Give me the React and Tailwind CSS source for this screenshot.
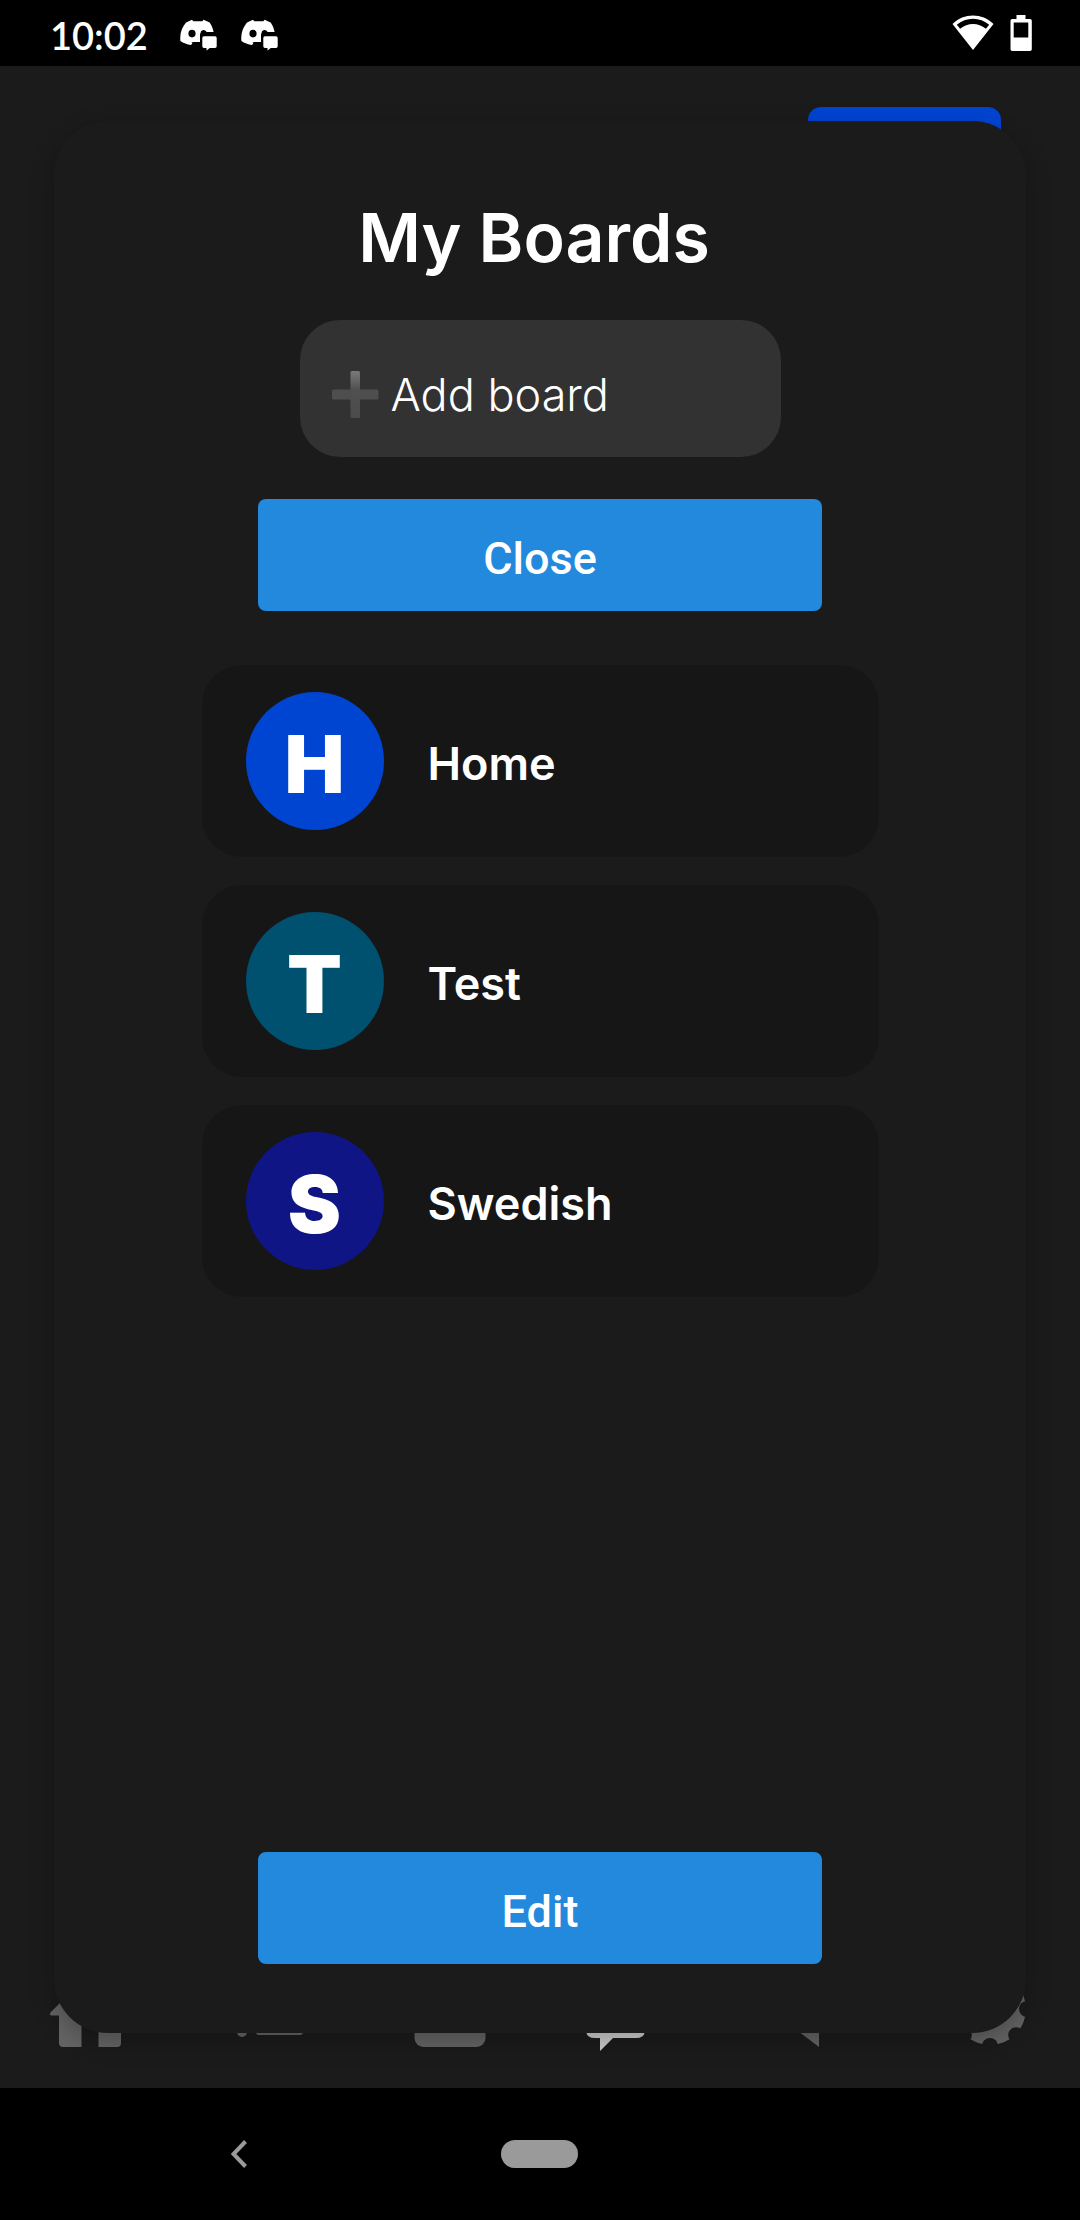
import React from "react";

const boards = [
  { name: "Home", color: "bg-[#0044d2]" },
  { name: "Test", color: "bg-[#00506f]" },
  { name: "Swedish", color: "bg-[#101585]" },
];

function DiscordNotification() {
  return (
    <svg width="37" height="32" viewBox="0 0 37 32" fill="#fff" aria-hidden="true">
      <path
        fillRule="evenodd"
        d="M6 3.5 12 .8l1.3 1.4h9L23.6.8l6 2.7c2.2 3 3.5 6.500 4 9.500H22.500c-1.500 0-2.500 1.200-2.500 2.700V23h-6.500l-2 .4.8 1.200-1.300 1.400C7 25.300 3.400 24.200.4 22-.4 14.500 1.800 8.500 6 3.500Zm6 7.300a3.600 3.800 0 1 0 0 7.600 3.600 3.800 0 0 0 0-7.600Zm8.400 2.600c.8-1.700 2.200-2.800 4-2.200 1.100.300 1.800 1 2.200 1.800h-4.100Z"
      />
      <path d="M24 17.300h11a1.700 1.700 0 0 1 1.700 1.700v8.200a1.700 1.700 0 0 1-1.700 1.700h-5.200l-3.300 2.600v-2.600H24a1.700 1.700 0 0 1-1.700-1.700V19a1.700 1.700 0 0 1 1.700-1.700Z" />
    </svg>
  );
}

function WifiIcon() {
  return (
    <svg width="42" height="36" viewBox="0 0 42 36" fill="#fff" aria-hidden="true">
      <path
        fillRule="evenodd"
        d="M.5 9C12-2.300 30-2.300 41.500 9L21 35Zm4.300.700 3.300 4c7.600-6.400 18.200-6.400 25.800 0l3.300-4C28 1.600 14 1.600 4.800 9.700Z"
      />
    </svg>
  );
}

function BatteryIcon() {
  return (
    <svg width="22" height="36" viewBox="0 0 22 36" fill="#fff" aria-hidden="true">
      <path
        fillRule="evenodd"
        d="M6.500 0h9v4H20a1.800 1.800 0 0 1 1.800 1.800v28.400A1.800 1.800 0 0 1 20 36H2.200A1.800 1.800 0 0 1 .5 34.200V5.800A1.800 1.800 0 0 1 2.200 4h4.300ZM3.700 7.500v15h14.600v-15Z"
      />
    </svg>
  );
}

function PlusIcon() {
  return (
    <svg width="47" height="47" viewBox="0 0 47 47" className="shrink-0" aria-hidden="true">
      <defs>
        <linearGradient id="plus" x1="0" y1="0" x2="0" y2="1">
          <stop offset="0" stopColor="#7a7a7a" />
          <stop offset=".4" stopColor="#505050" />
          <stop offset="1" stopColor="#4b4b4b" />
        </linearGradient>
      </defs>
      <rect y="18.500" width="46.500" height="10" rx="1.500" fill="#4e4e4e" />
      <rect x="18.500" width="9.500" height="47" rx="1.500" fill="url(#plus)" />
    </svg>
  );
}

const gearNotches = [0, 45, 90, 135, 180, 225, 270, 315];

const tabs = [
  {
    label: "Home",
    color: "text-[#646464]",
    icon: (
      <path d="M48 12 8.500 51.500Q7 54.500 10 54.500H17V82Q17 86 21 86H39.500V58H56.500V86H75Q79 86 79 82V54.500H87Q89 54.500 87.500 51.500Z" />
    ),
  },
  {
    label: "List",
    color: "text-[#646464]",
    icon: (
      <>
        <circle cx="20" cy="26" r="5" />
        <circle cx="20" cy="49" r="5" />
        <circle cx="20" cy="71" r="5" />
        <rect x="34" y="22" width="47" height="8" rx="3" />
        <rect x="34" y="45" width="47" height="8" rx="3" />
        <rect x="34" y="66" width="47" height="8" rx="3" />
      </>
    ),
  },
  {
    label: "Board",
    color: "text-[#646464]",
    icon: <rect x="12.500" y="14" width="71" height="72" rx="9" />,
  },
  {
    label: "Chat",
    color: "text-[#cccccc]",
    icon: <path d="M13 30H54Q63 30 63 39V69Q63 77 54 77H31L18 90V77H13Q4 77 4 69V39Q4 30 13 30Z" />,
  },
  {
    label: "Announcements",
    color: "text-[#646464]",
    icon: <path d="M57 13V86L28 64H14V35H28Z" />,
  },
  {
    label: "Settings",
    color: "text-[#646464]",
    icon: (
      <>
        <mask id="gear">
          <circle cx="48" cy="48" r="36" fill="#fff" />
          <circle cx="48" cy="48" r="12" fill="#000" />
          {gearNotches.map((angle) => (
            <circle key={angle} cx="48" cy="85" r="8" fill="#000" transform={`rotate(${angle} 48 48)`} />
          ))}
        </mask>
        <rect width="96" height="96" mask="url(#gear)" />
      </>
    ),
  },
];

function StatusBar() {
  return (
    <header className="flex h-[66px] items-center justify-between bg-black pr-12 pl-[50px]">
      <div className="flex items-center">
        <time className="pt-1 font-['Lato',sans-serif] text-[38px] leading-none font-semibold">10:02</time>
        <div className="ml-8 flex gap-6 pt-1">
          <DiscordNotification />
          <DiscordNotification />
        </div>
      </div>
      <div className="flex items-center gap-4">
        <WifiIcon />
        <BatteryIcon />
      </div>
    </header>
  );
}

function ActionButton({ children }) {
  return (
    <button
      type="button"
      className="h-28 w-[58%] shrink-0 rounded-lg bg-[#2289dd] pt-1.5 font-['Roboto',sans-serif] text-[45px] leading-none font-medium"
    >
      {children}
    </button>
  );
}

function BoardsModal() {
  return (
    <section
      role="dialog"
      aria-labelledby="boards-title"
      className="absolute inset-x-[5%] inset-y-[55px] flex flex-col items-center rounded-[54px] bg-[#1b1b1b] pt-[76px] pb-[69px] shadow-[0_8px_24px_rgba(0,0,0,0.25)]"
    >
      <h1 id="boards-title" className="pr-3 text-[68px] leading-[80px] font-semibold">
        My Boards
      </h1>
      <label className="mt-[43px] flex h-[137px] w-[481px] max-w-full shrink-0 items-center gap-3 rounded-[40px] bg-[#323232] pt-3 pr-8 pl-8">
        <PlusIcon />
        <input
          type="text"
          aria-label="Add board"
          placeholder="Add board"
          className="w-full min-w-0 bg-transparent text-[45px] leading-none font-light outline-none placeholder:text-white placeholder:opacity-100"
        />
      </label>
      <div className="mt-[42px] flex w-full justify-center">
        <ActionButton>Close</ActionButton>
      </div>
      <ul className="mt-[54px] flex w-[677px] max-w-full flex-col gap-7">
        {boards.map((board) => (
          <li key={board.name}>
            <button type="button" className="flex h-48 w-full items-center gap-11 rounded-[40px] bg-[#161616] px-11">
              <span
                className={`flex size-[138px] shrink-0 items-center justify-center rounded-full pt-1.5 text-[80px] leading-none font-black ${board.color}`}
              >
                {board.name[0]}
              </span>
              <span className="pt-1 text-[45px] leading-none font-semibold">{board.name}</span>
            </button>
          </li>
        ))}
      </ul>
      <div className="mt-auto flex w-full justify-center">
        <ActionButton>Edit</ActionButton>
      </div>
    </section>
  );
}

export default function App() {
  return (
    <div className="flex min-h-screen flex-col bg-black font-['Inter',sans-serif] text-white">
      <StatusBar />
      <main className="relative flex grow flex-col justify-between bg-[#1b1b1b]">
        <div className="flex justify-end pt-[41px] pr-[79px]">
          <button type="button" aria-label="Boards" className="h-24 w-[193px] rounded-[13px] bg-[#0044d2]" />
        </div>
        <nav aria-label="Tabs" className="grid grid-cols-6 pb-[31px]">
          {tabs.map((tab) => (
            <button key={tab.label} type="button" aria-label={tab.label} className={`flex justify-center ${tab.color}`}>
              <svg width="96" height="96" viewBox="0 0 96 96" fill="currentColor" aria-hidden="true">
                {tab.icon}
              </svg>
            </button>
          ))}
        </nav>
        <BoardsModal />
      </main>
      <footer className="grid h-33 grid-cols-3 place-items-center bg-black px-[89px]">
        <button type="button" aria-label="Back">
          <svg width="16" height="28" viewBox="0 0 16 28" fill="none" stroke="#9a9a9a" strokeWidth="4" aria-hidden="true">
            <path d="M14.500 1.500 2.500 14l12 12.500" />
          </svg>
        </button>
        <button type="button" aria-label="Home screen" className="h-7 w-[77px] rounded-full bg-[#9a9a9a]" />
      </footer>
    </div>
  );
}
